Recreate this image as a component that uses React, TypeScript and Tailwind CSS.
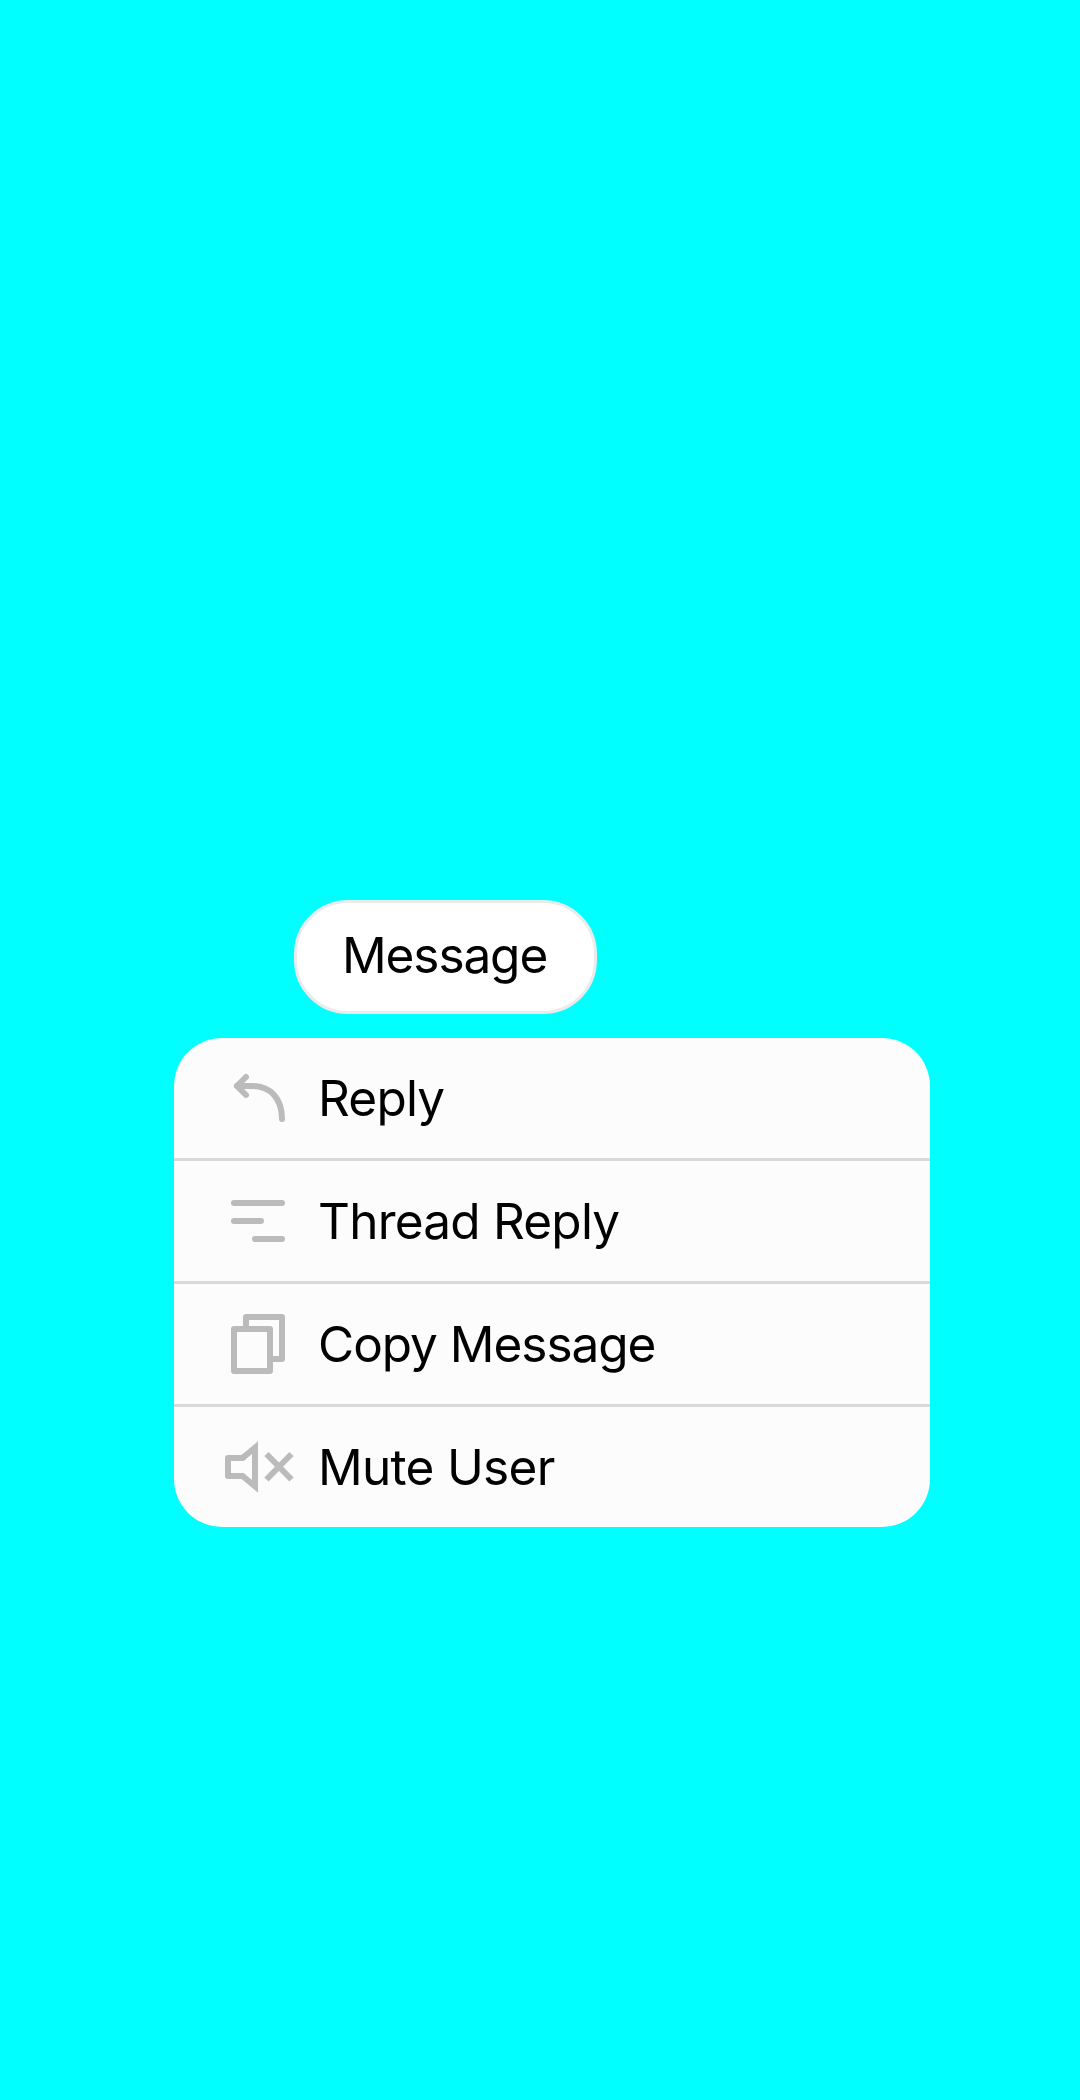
import type { ReactNode } from "react";

function Icon({ children }: { children: ReactNode }) {
  return (
    <svg
      viewBox="0 0 108 120"
      className="h-[120px] w-[108px] shrink-0"
      fill="none"
      stroke="#bbbbbb"
      strokeWidth={6}
      aria-hidden="true"
    >
      {children}
    </svg>
  );
}

const items = [
  {
    label: "Reply",
    spacing: "tracking-[-0.8px]",
    icon: (
      <g strokeLinecap="round" strokeLinejoin="round">
        <path d="M36 39L27 48L36 57" />
        <path d="M27 48H42C60 48 72 60 72 81" />
      </g>
    ),
  },
  {
    label: "Thread Reply",
    spacing: "tracking-[-0.78px]",
    icon: <path d="M24 42H72M24 60H51M45 78H72" strokeLinecap="round" />,
  },
  {
    label: "Copy Message",
    spacing: "tracking-[-1.03px]",
    icon: (
      <g strokeLinejoin="round">
        <path d="M24 45H60V87H24Z" />
        <path d="M36 42V33H72V75H63" />
      </g>
    ),
  },
  {
    label: "Mute User",
    spacing: "tracking-[-0.7px]",
    icon: (
      <g>
        <path d="M32.5 51L45 40.7V79.3L32.5 69" />
        <path d="M33 51H18V69H33" strokeLinejoin="round" />
        <path d="M32 51H32.5L34 49.8M32 69H32.5L34 70.2" />
        <path d="M56.5 47L81.5 72.5M81.5 47L56.5 72.5" />
      </g>
    ),
  },
];

export default function App() {
  return (
    <main className="flex h-[2100px] w-[1080px] flex-col items-start gap-6 bg-[#00ffff] pt-[900px] font-['Inter',sans-serif] text-[49.5px] leading-[60px] text-black">
      <div className="ml-[294px] flex h-[114px] w-[303px] items-center rounded-[54px] border-[3px] border-[#ebebeb] bg-white pb-1 pl-[45px]">
        <span className="whitespace-nowrap tracking-[-1.1px]">Message</span>
      </div>
      <ul className="ml-[174px] w-[756px] divide-y-[3px] divide-[#d9d9d9] overflow-hidden rounded-[48px] bg-[#fcfcfc]">
        {items.map((item) => (
          <li key={item.label} className="box-content flex h-[120px] items-center pl-9">
            <Icon>{item.icon}</Icon>
            <span className={`whitespace-nowrap ${item.spacing}`}>{item.label}</span>
          </li>
        ))}
      </ul>
    </main>
  );
}
